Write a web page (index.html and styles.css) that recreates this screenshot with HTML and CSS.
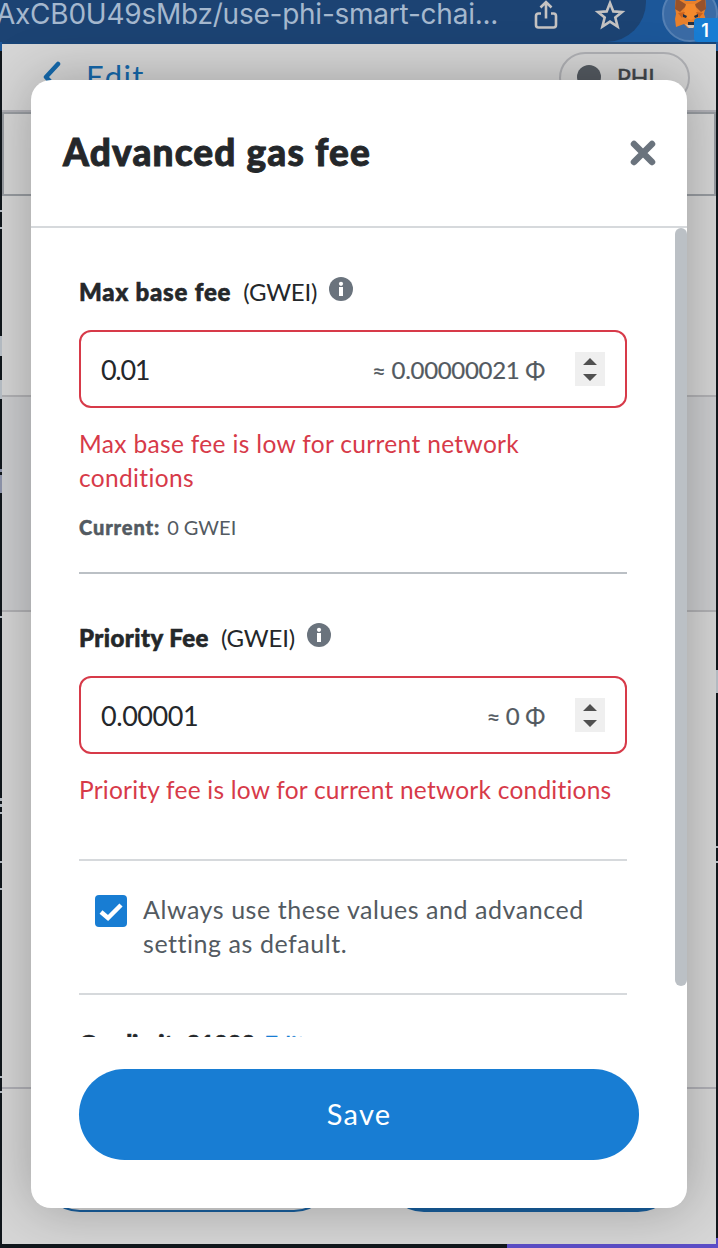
FILE: index.html
```html
<!DOCTYPE html>
<html lang="en">
<head>
<meta charset="utf-8">
<title>Advanced gas fee</title>
<link rel="stylesheet" href="styles.css">
</head>
<body>
<header class="browser-bar">
  <div class="omnibox">
    <span class="url">AxCB0U49sMbz/use-phi-smart-chai...</span>
    <svg class="share" width="26" height="32" viewBox="0 0 26 32"><path d="M8 13.500H5.500Q3 13.500 3 16V25Q3 27.500 5.500 27.500H20.500Q23 27.500 23 25V16Q23 13.500 20.500 13.500H18M13 18.500V3M7.500 7.500L13 2L18.500 7.500"/></svg>
    <svg class="star" width="32" height="32" viewBox="0 0 32 32"><path d="M16 4L19.300 12.400L28 13L21.300 18.500L23.600 27.500L16 22.600L8.400 27.500L10.700 18.500L4 13L12.700 12.400Z"/></svg>
  </div>
  <div class="extension">
    <svg class="fox" width="36" height="34" viewBox="0 0 36 34">
      <path fill="#e9802b" d="M3 1L13 5H22L32 1L33 10L31 18L33 24L30 31L24 29L20 32H15L11 28L3 31L2 23L3 18L2 11Z"/>
      <path fill="#98522a" d="M3 2L14 9L7 16L2 13ZM32 2L21 9L28 16L33 13Z"/>
      <path fill="#f58a2c" d="M13 8H22L25 20L18 24L10 20Z"/>
      <path fill="#c9621f" d="M5 17L12 16L9 22ZM30 17L23 16L26 22Z"/>
      <path fill="#263042" d="M10 18L14 20L13 22L10 21ZM25 18L21 20L22 22L25 21ZM15 26H21V29H15Z"/>
      <path fill="#d6c3b3" d="M12 28L15 29H21L23 28L20 32H16Z"/>
    </svg>
    <span class="count">1</span>
  </div>
</header>
<main class="popup">
  <div class="top-row">
    <svg class="back" width="22" height="34" viewBox="0 0 22 34"><path d="M17 3L5 16L17 29"/></svg>
    <span class="edit">Edit</span>
    <div class="network"><i class="dot"></i><span class="phi">PHI</span></div>
  </div>
  <div class="box"></div>
  <div class="gap"></div>
  <div class="summary"></div>
  <div class="details"></div>
  <div class="actions"><i class="outline"></i><i class="solid"></i></div>
</main>
<div class="edge edge-left">
  <i class="blue" style="top:42px;height:9px"></i><i class="light" style="top:336px;height:20px"></i><i class="light" style="top:380px;height:19px"></i><i class="lilac" style="top:469px;height:3px"></i><i class="lilac" style="top:475px;height:18px"></i><i class="light" style="top:210px;height:2px"></i><i class="light" style="top:227px;height:2px"></i><i class="light" style="top:616px;height:2px"></i><i class="light" style="top:798px;height:3px"></i><i class="light" style="top:804px;height:3px"></i><i class="light" style="top:812px;height:2px"></i><i class="light" style="top:861px;height:2px"></i><i class="light" style="top:888px;height:2px"></i><i class="light" style="top:1076px;height:2px"></i><i class="light" style="top:1091px;height:2px"></i>
</div>
<div class="edge edge-right">
  <i class="blue" style="top:42px;height:9px"></i><i class="light" style="top:670px;height:23px"></i><i class="light" style="top:846px;height:2px"></i><i class="light" style="top:861px;height:2px"></i><i class="violet" style="top:1238px;height:10px"></i>
</div>
<div class="purple"></div>
<section class="modal">
  <div class="modal-head">
    <h1>Advanced gas fee</h1>
    <svg class="close" width="26" height="26" viewBox="0 0 26 26"><path d="M4 4L22 22M22 4L4 22"/></svg>
  </div>
  <div class="modal-body">
    <div class="content">
      <div class="label"><b class="max">Max base fee</b><span class="unit">(GWEI)</span>
        <svg class="info" width="24" height="24" viewBox="0 0 24 24"><circle cx="12" cy="12" r="12"/><path d="M10 10H14V19H10Z"/><circle class="pip" cx="12" cy="6.800" r="2.100"/></svg></div>
      <div class="field"><span class="value short">0.01</span><span class="fiat">≈ 0.00000021 Φ</span>
        <svg class="spin" width="30" height="34" viewBox="0 0 30 34"><path d="M8 13L15 6L22 13ZM8 22H22L15 29Z"/></svg></div>
      <p class="error">Max base fee is low for current network<br>conditions</p>
      <p class="current"><b>Current:</b><span>0 GWEI</span></p>
      <hr class="strong">
      <div class="label second"><b>Priority Fee</b><span class="unit">(GWEI)</span>
        <svg class="info" width="24" height="24" viewBox="0 0 24 24"><circle cx="12" cy="12" r="12"/><path d="M10 10H14V19H10Z"/><circle class="pip" cx="12" cy="6.800" r="2.100"/></svg></div>
      <div class="field"><span class="value">0.00001</span><span class="fiat">≈ 0 Φ</span>
        <svg class="spin" width="30" height="34" viewBox="0 0 30 34"><path d="M8 13L15 6L22 13ZM8 22H22L15 29Z"/></svg></div>
      <p class="error single">Priority fee is low for current network conditions</p>
      <hr class="third">
      <div class="default">
        <svg class="check" width="32" height="32" viewBox="0 0 32 32"><rect width="32" height="32" rx="4"/><path d="M6 17L13 23L26 10"/></svg>
        <p>Always use these values and advanced<br>setting as default.</p>
      </div>
      <hr class="fourth">
      <div class="limit"><b>Gas limit: 21000</b><span>Edit</span></div>
    </div>
    <div class="scrollbar"></div>
  </div>
  <div class="modal-foot"><button class="save">Save</button></div>
</section>
</body>
</html>
```
FILE: styles.css
```css
* { box-sizing: border-box; }
body { margin: 0; position: relative; width: 718px; height: 1248px; overflow: hidden; background: #11171c; font-family: Lato, sans-serif; color: #24272a; }
svg { display: block; flex: none; }
h1, p { margin: 0; }
p, span, b { white-space: nowrap; }

.browser-bar { display: flex; height: 44px; background: #1c5799; border-bottom: 2px solid #194578; }
.omnibox { display: flex; flex: none; width: 646px; height: 42px; background: #1c4373; border-radius: 0 0 40px 0; }
.url { width: 532px; margin-left: -4px; font: 28px/29px Inter, sans-serif; letter-spacing: -0.24px; color: #a5b8ce; }
.share { margin-left: 5px; }
.star { margin-left: 35px; margin-top: -1px; }
.share path, .star path { fill: none; stroke: #c5c3c2; stroke-width: 2.6; }
.extension { position: relative; flex: none; width: 56px; height: 56px; margin: -14px 0 0 16px; border: 2px solid #5580b4; border-radius: 28px; background: #3b6ba5; }
.fox { margin: 8px 0 0 9px; }
.count { position: absolute; left: 30px; top: 30px; width: 26px; height: 24px; border-radius: 4px; background: #187dd3; color: #fff; font: 600 18px/26px Inter, sans-serif; text-align: center; padding-right: 6px; }
.count { padding-right: 4px; }

.popup { margin: 0 2px; height: 1200px; background: #d6d6d6; }
.top-row { display: flex; height: 68px; border-bottom: 2px solid #b0b0b6; }
.back { margin: 17px 0 0 39px; }
.back path { fill: none; stroke: #1569ac; stroke-width: 4.5; stroke-linecap: round; stroke-linejoin: round; }
.edit { margin: 15px 0 0 23px; font-size: 31px; line-height: 34px; letter-spacing: 1.4px; color: #1569ac; }
.network { display: flex; width: 131px; height: 52px; margin: 8px 26px 0 auto; border: 2px solid #b0b1b5; border-radius: 26px; }
.dot { width: 24px; height: 24px; margin: 11px 0 0 16px; border-radius: 50%; background: #555b62; }
.phi { margin: 10px 0 0 16px; font-size: 23px; line-height: 26px; color: #41464b; -webkit-text-stroke: 0.5px; }
.box { height: 84px; border: 2px solid #989ca1; }
.gap { height: 199px; }
.summary { height: 217px; background: #cccdcf; border: solid #b2b2b5; border-width: 2px 0; }
.details { height: 475px; }
.actions { display: flex; height: 157px; border-top: 2px solid #b0b0b6; padding: 43px 38px; gap: 50px; }
.actions i { width: 294px; height: 80px; border: 2px solid #175e9d; border-radius: 40px; }
.actions .solid { background: #175e9d; }
.edge { position: absolute; top: 0; width: 2px; height: 1248px; }
.edge-left { left: 0; }
.edge-right { right: 0; }
.edge i { position: absolute; left: 0; width: 2px; }
.light { background: #b9c0c8; }
.lilac { background: #9096ad; }
.blue { background: #1c5799; }
.violet { background: #5c4ec7; }
.purple { position: absolute; left: 507px; top: 1244px; width: 211px; height: 4px; background: #5c4ec7; }

.modal { position: absolute; left: 31px; top: 80px; width: 656px; height: 1128px; border-radius: 20px; background: #fff; box-shadow: 0 0 56px rgba(0,0,0,.27); display: flex; flex-direction: column; }
.modal-head { display: flex; justify-content: space-between; height: 148px; border-bottom: 2px solid #d6d9dc; padding: 0 31px 0 32px; }
h1 { margin-top: 47px; font-size: 37px; line-height: 50px; font-weight: 900; letter-spacing: 1.15px; -webkit-text-stroke: 0.9px; }
.close { margin-top: 60px; }
.close path { stroke: #6a737d; stroke-width: 6.5; stroke-linecap: round; }
.modal-body { display: flex; height: 809px; overflow: hidden; }
.content { width: 644px; padding: 48px 48px 0; }
.scrollbar { width: 12px; height: 758px; border-radius: 6px; background: #bbc0c5; }
.label { display: flex; height: 54px; font-size: 24px; line-height: 32px; }
.label b { font-weight: 900; letter-spacing: 0.45px; -webkit-text-stroke: 0.6px; }
.label .max { letter-spacing: 0.8px; }
.unit { margin-left: 12px; letter-spacing: -0.2px; }
.info { margin: 1px 0 0 12px; fill: #6a737d; }
.info path, .info .pip { fill: #fff; }
.field { display: flex; align-items: center; width: 548px; height: 78px; border: 2px solid #d73a49; border-radius: 12px; padding: 0 20px; }
.value { font-size: 27px; letter-spacing: -0.45px; }
.value.short { letter-spacing: -1.3px; }
.fiat { margin-left: auto; font-size: 24px; letter-spacing: -0.3px; color: #535a61; -webkit-text-stroke: 0.2px; }
.spin { margin-left: 30px; background: #efefef; fill: #505050; }
.error { margin-top: 19px; font-size: 24.5px; line-height: 34px; letter-spacing: 0.34px; color: #d73a49; }
.error.single { letter-spacing: 0.23px; }
.current { margin-top: 18px; font-size: 20px; line-height: 28px; color: #535a61; }
.current b { font-weight: 900; margin-right: 7px; letter-spacing: 0.9px; -webkit-text-stroke: 0.5px; }
hr { width: 548px; height: 2px; margin: 0; border: 0; background: #d6d9dc; }
.strong { margin-top: 31px; background: #bbc0c5; }
.second { margin-top: 48px; }
.third { margin-top: 52px; }
.default { display: flex; gap: 16px; padding: 31px 16px 0; height: 132px; font-size: 25px; line-height: 34px; letter-spacing: 0.55px; color: #535a61; }
.check { margin-top: 3px; fill: #187dd3; }
.check path { fill: none; stroke: #fff; stroke-width: 4.5; }
.limit { margin-top: 32px; font-size: 24px; line-height: 34px; }
.limit b { font-weight: 900; margin-right: 9px; letter-spacing: -0.2px; word-spacing: 2px; -webkit-text-stroke: 0.6px; }
.limit span { color: #187dd3; -webkit-text-stroke: 0.5px; }
.modal-foot { padding: 32px 48px; }
.save { width: 560px; height: 91px; border: 0; border-radius: 46px; padding: 0 0 2px; background: #187dd3; color: #fff; font: 29px/40px Lato, sans-serif; letter-spacing: 1.3px; }
```
